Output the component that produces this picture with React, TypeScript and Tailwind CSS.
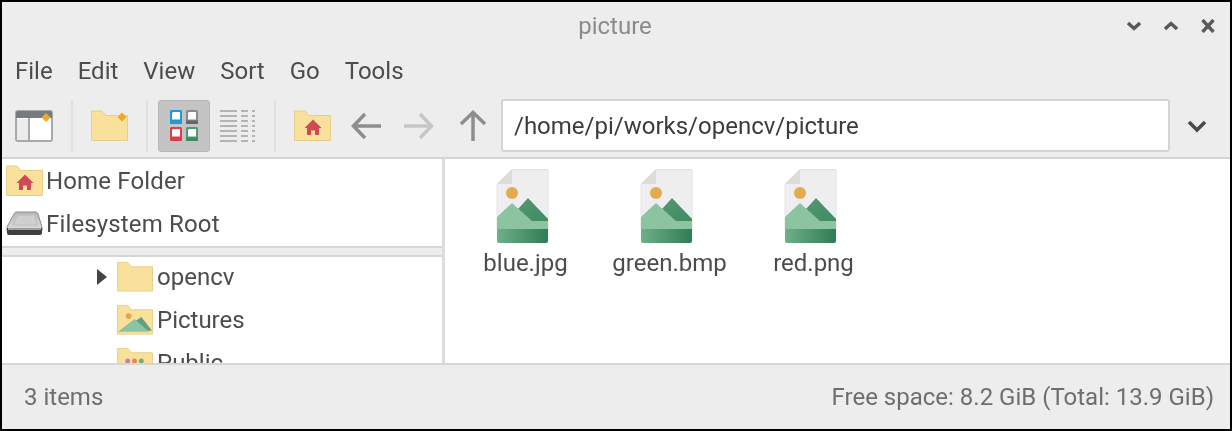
const folderPath = "M0.5 1 H11 L15 5.5 H36.5 V30.5 H0.5 Z";

function FolderBase({ className, children }: { className?: string; children?: React.ReactNode }) {
  return (
    <svg viewBox="0 0 37 31" className={className}>
      <path d={folderPath} fill="#f9e19c" stroke="#e6cf8e" />
      {children}
    </svg>
  );
}

function HomeFolder({ className }: { className?: string }) {
  return (
    <FolderBase className={className}>
      <path d="M19 9.5 L27.5 18 H25 V25 H21 V20.5 H17 V25 H13 V18 H10.5 Z" fill="#cf4a55" />
    </FolderBase>
  );
}

function PicturesFolder({ className }: { className?: string }) {
  return (
    <FolderBase className={className}>
      <circle cx="12" cy="12" r="3" fill="#e0a94e" />
      <path d="M19 17 L25 13 L36 27 H22 Z" fill="#5f9f7b" />
      <path d="M1 28 L18 15 L33 28 Z" fill="#8cc4a2" />
    </FolderBase>
  );
}

function PublicFolder({ className }: { className?: string }) {
  return (
    <FolderBase className={className}>
      <circle cx="11" cy="14" r="2.5" fill="#c77bc0" />
      <circle cx="18" cy="14" r="2.5" fill="#e08a55" />
      <circle cx="25" cy="14" r="2.5" fill="#6cb07f" />
    </FolderBase>
  );
}

function DriveIcon({ className }: { className?: string }) {
  return (
    <svg viewBox="0 0 37 25" className={className}>
      <defs>
        <linearGradient id="driveTop" x1="0" x2="0" y1="0" y2="1">
          <stop offset="0" stopColor="#b8b8b8" />
          <stop offset="1" stopColor="#dedede" />
        </linearGradient>
      </defs>
      <path d="M10 1 H30 Q31 1 32 3 L36 16 V20 H1 V16 L8 3 Q9 1 10 1 Z" fill="url(#driveTop)" stroke="#8c8c8c" />
      <path d="M11 4 H29 L31 14 H7 Z" fill="#cfcfcf" stroke="#bcbcbc" />
      <path d="M1 17 H36 V22 Q36 24 34 24 H3 Q1 24 1 22 Z" fill="#3f3f3f" />
      <rect x="2" y="17" width="33" height="2" fill="#a0a0a0" />
    </svg>
  );
}

function ImageFile() {
  return (
    <svg viewBox="0 0 53 74" className="w-[53px] h-[74px] mr-[6px]">
      <defs>
        <linearGradient id="band" x1="0" x2="1" y1="0" y2="0">
          <stop offset="0" stopColor="#6fae8c" />
          <stop offset="1" stopColor="#2f7d52" />
        </linearGradient>
        <linearGradient id="back" x1="0" x2="1" y1="0" y2="1">
          <stop offset="0" stopColor="#4f9a72" />
          <stop offset="1" stopColor="#3f8a62" />
        </linearGradient>
      </defs>
      <path d="M16 0.5 H52 V60 H1 V15 Z" fill="#eeeeee" stroke="#e2e2e2" />
      <path d="M16 0.5 V15 H1 Z" fill="#dcdcdc" />
      <circle cx="16" cy="24" r="6" fill="#e3aa50" />
      <path d="M22 40 L32 29 L52 50 V54 H36 Z" fill="url(#back)" />
      <path d="M1 48 L16 34 L36 52 H52 V61 H1 Z" fill="#8cc4a2" />
      <path d="M1 60 H52 V72 Q52 74 50 74 H3 Q1 74 1 72 Z" fill="url(#band)" />
    </svg>
  );
}

function ViewTile({ color, dark }: { color: string; dark: string }) {
  return (
    <svg viewBox="0 0 12 14" className="w-[12px] h-[14px]">
      <rect x="0" y="0" width="12" height="14" rx="1.5" style={{ fill: color }} />
      <path d="M3 2 H10 V9.5 H2 V3 Z" fill="#fff" />
      <rect x="0" y="10.5" width="12" height="3.5" rx="1" style={{ fill: dark }} />
    </svg>
  );
}

function Separator() {
  return <div className="w-[2px] h-[52px] bg-[#e0e0e0]" />;
}

function Diamond({ cx, cy }: { cx: number; cy: number }) {
  return <path d={`M${cx} ${cy - 4.5} L${cx + 4.5} ${cy} L${cx} ${cy + 4.5} L${cx - 4.5} ${cy} Z`} fill="#f5a623" />;
}

const menus = ["File", "Edit", "View", "Sort", "Go", "Tools"];
const files = ["blue.jpg", "green.bmp", "red.png"];

export default function App() {
  return (
    <div
      className="w-[1232px] h-[431px] border-2 border-black bg-[#ededed] flex flex-col overflow-hidden text-[#4c4c4c] text-[24px] leading-none blur-[0.7px]"
      style={{ fontFamily: "Roboto, sans-serif" }}
    >
      {/* title bar */}
      <div className="relative h-[46px] flex items-center justify-center shrink-0 text-[#8b8b8b] pr-[2px] pt-[1px]">
        picture
        <div className="absolute right-[15px] top-[17px] flex gap-[23px] text-[#5a5a5a]">
          <svg viewBox="0 0 14 14" className="w-[14px] h-[14px]" fill="none" stroke="currentColor" strokeWidth="3.4">
            <path d="M1 4 L7 9.5 L13 4" />
          </svg>
          <svg viewBox="0 0 14 14" className="w-[14px] h-[14px]" fill="none" stroke="currentColor" strokeWidth="3.4">
            <path d="M1 10 L7 4.5 L13 10" />
          </svg>
          <svg viewBox="0 0 14 14" className="w-[14px] h-[14px]" fill="none" stroke="currentColor" strokeWidth="3.4">
            <path d="M1.5 1 L12.5 13 M12.5 1 L1.5 13" />
          </svg>
        </div>
      </div>

      {/* menu */}
      <div className="h-[46px] flex items-center pl-[13px] gap-[25px] shrink-0">
        {menus.map((m) => (
          <span key={m}>{m}</span>
        ))}
      </div>

      {/* toolbar */}
      <div className="h-[63px] flex items-center shrink-0 pl-[13px]">
        <svg viewBox="0 0 38 32" className="w-[38px] h-[32px]">
          <rect x="1" y="1" width="36" height="30" rx="2" fill="#fff" stroke="#a9a9a9" strokeWidth="2" />
          <path d="M1 3 Q1 1 3 1 H35 Q37 1 37 3 V8 H1 Z" fill="#757b80" />
          <path d="M14 8 V31" stroke="#a9a9a9" strokeWidth="2" />
          <path d="M2 9 H13 V30 H2 Z" fill="#ececec" />
          <Diamond cx={31} cy={7.5} />
        </svg>
        <div className="ml-[18px]"><Separator /></div>
        <svg viewBox="0 0 37 31" className="ml-[18px] w-[37px] h-[31px]">
          <path d={folderPath} fill="#f9e19c" stroke="#e6cf8e" />
          <Diamond cx={31} cy={7} />
        </svg>
        <div className="ml-[18px]"><Separator /></div>
        <div className="ml-[10px] w-[52px] h-[52px] rounded-[3px] bg-[#c4c4c4] border border-[#b8b8b8] grid grid-cols-[12px_12px] gap-x-[4px] gap-y-[3px] content-center justify-center">
          <ViewTile color="#1e9ad6" dark="#1e9ad6" />
          <ViewTile color="#8a8a8a" dark="#666666" />
          <ViewTile color="#d9404a" dark="#d9404a" />
          <ViewTile color="#4f9a72" dark="#3f8a62" />
        </div>
        <svg viewBox="0 0 35 36" className="ml-[10px] w-[35px] h-[36px]">
          <g stroke="#b4b4b4" strokeWidth="2">
            {[3, 8, 13, 18, 23, 28, 33].map((y) => (
              <g key={y}>
                <path d={`M0 ${y} H17`} />
                <path d={`M21 ${y} H28`} />
                <path d={`M32 ${y} H35`} />
              </g>
            ))}
          </g>
        </svg>
        <div className="ml-[19px]"><Separator /></div>
        <HomeFolder className="ml-[18px] w-[37px] h-[31px]" />
        <svg viewBox="0 0 30 28" className="ml-[20px] w-[30px] h-[28px]" fill="none" stroke="#8e8e8e" strokeWidth="3.5">
          <path d="M30 14 H3 M14 2 L2.5 14 L14 26" />
        </svg>
        <svg viewBox="0 0 30 28" className="ml-[23px] w-[30px] h-[28px]" fill="none" stroke="#c6c6c6" strokeWidth="3.5">
          <path d="M0 14 H27 M16 2 L27.5 14 L16 26" />
        </svg>
        <svg viewBox="0 0 28 31" className="ml-[25px] w-[28px] h-[31px]" fill="none" stroke="#8e8e8e" strokeWidth="3.5">
          <path d="M14 31 V3 M2 14 L14 2.5 L26 14" />
        </svg>
        <div className="ml-[14px] w-[669px] h-[53px] bg-white border-2 border-[#d4d4d4] rounded-[3px] flex items-center pl-[11px] text-[#3c3c3c]">
          /home/pi/works/opencv/picture
        </div>
        <svg viewBox="0 0 20 14" className="ml-[17px] w-[20px] h-[14px]" fill="none" stroke="#4a4a4a" strokeWidth="3.6">
          <path d="M2 3 L10 11 L18 3" />
        </svg>
      </div>

      {/* body */}
      <div className="flex flex-1 min-h-0 border-y-2 border-[#d6d6d6]">
        <div className="w-[440px] flex flex-col shrink-0">
          <div className="h-[89px] bg-white flex flex-col border-b-2 border-[#d6d6d6] shrink-0 tracking-[0.15px]">
            <div className="h-[43px] flex items-center pl-[4px] gap-[3px]">
              <HomeFolder className="w-[37px] h-[31px]" />
              Home Folder
            </div>
            <div className="h-[43px] flex items-center pl-[4px] gap-[3px]">
              <DriveIcon className="w-[37px] h-[25px]" />
              Filesystem Root
            </div>
          </div>
          <div className="h-[7px] shrink-0" />
          <div className="flex-1 min-h-0 bg-white border-t-2 border-[#d6d6d6] overflow-hidden pl-[95px]">
            <div className="h-[43px] -mt-[2px] flex items-center">
              <div className="w-[10px] h-0 border-y-[8px] border-y-transparent border-l-[10px] border-l-[#444444]" />
              <FolderBase className="ml-[10px] w-[36px] h-[31px]" />
              <span className="ml-[4px]">opencv</span>
            </div>
            <div className="h-[43px] flex items-center pl-[20px]">
              <PicturesFolder className="w-[36px] h-[31px]" />
              <span className="ml-[4px]">Pictures</span>
            </div>
            <div className="h-[43px] flex items-center pl-[20px]">
              <PublicFolder className="w-[36px] h-[31px]" />
              <span className="ml-[4px]">Public</span>
            </div>
          </div>
        </div>
        <div className="w-[3px] shrink-0 bg-[#dcdcdc]" />
        <div className="flex-1 bg-white pt-[10px] pl-[24px] flex gap-[31px] items-start">
          {files.map((f) => (
            <div key={f} className="w-[113px] flex flex-col items-center gap-[8px]">
              <ImageFile />
              <span>{f}</span>
            </div>
          ))}
        </div>
      </div>

      {/* status bar */}
      <div className="h-[64px] shrink-0 flex items-center justify-between pl-[22px] pr-[16px] text-[#6e6e6e]">
        <span>3 items</span>
        <span>Free space: 8.2 GiB (Total: 13.9 GiB)</span>
      </div>
    </div>
  );
}
